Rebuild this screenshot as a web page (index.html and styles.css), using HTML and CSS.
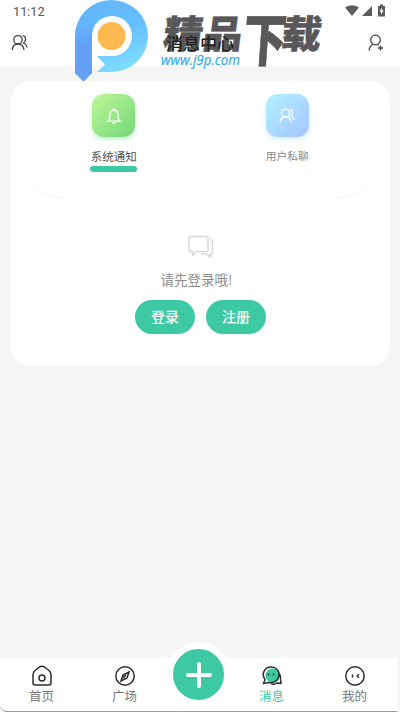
FILE: index.html
```html
<!DOCTYPE html>
<html lang="zh-CN">
<head>
<meta charset="utf-8">
<title>消息中心</title>
<link rel="stylesheet" href="styles.css">
</head>
<body>
<div class="screen">
  <header class="top">
    <div class="status">
      <span>11:12</span>
      <svg width="42" height="14" viewBox="0 0 42 14" fill="#5c5c5c"><path d="M0 4.500Q7 0 14 4.500L7 13z"/><path d="M17 13L27 3V13z"/><path d="M35 1.500h3V3h2v10.500h-7V3h2z"/><path d="M37 4.500l-2.500 4H36v3l2.700-4H37z" fill="#fff"/></svg>
    </div>
    <div class="titlebar">
      <svg class="line" width="18" height="18" viewBox="0 0 18 18"><circle cx="7" cy="5.800" r="4.200"/><path d="M1.200 16q.5-6 5.800-6t6 6M11.500 1.600q3.500.5 3 4.200-.2 2-2 3.200 3 1.200 3.700 4.500"/></svg>
      <h1>消息中心</h1>
      <svg class="line" width="18" height="18" viewBox="0 0 18 18"><circle cx="8.500" cy="6" r="4.800"/><path d="M2 16.500q.8-5 4-6M10.500 10.500l1.200.8M13.500 11.500v5M11 14h5"/></svg>
    </div>
  </header>
  <main class="card">
    <div class="tabs">
      <div class="tab active">
        <div class="tile green"><svg width="18" height="20" viewBox="0 0 18 20"><path d="M9 2.200V4M2.800 15.200q2-1.200 2-5Q4.800 4 9 4t4.200 6.200q0 3.800 2 5zM7.500 17h3"/></svg></div>
        <span>系统通知</span><i></i>
      </div>
      <div class="tab">
        <div class="tile blue"><svg width="18" height="18" viewBox="0 0 18 18"><circle cx="7.500" cy="6" r="4"/><path d="M2 15.500q.5-5.500 5.500-5.500t5.500 5.500M12 2.500q3 .5 2.500 3.500-.2 2-2 2.800 3 1 3.500 4"/></svg></div>
        <span>用户私聊</span>
      </div>
    </div>
    <svg class="arcs" width="379" height="20" viewBox="0 0 379 20"><path d="M23 4Q38 15 55 15M322 15q23 0 40-17" fill="none" stroke="#f7f7f7"/></svg>
    <div class="empty">
      <svg width="26" height="24" viewBox="0 0 26 24"><path d="M2 1.500h17q1 0 1 1v13q0 1-1 1H8.500l-4 4v-4H2q-1 0-1-1v-13q0-1 1-1zM22 5h1.500q1 0 1 1v12q0 1-1 1H22v3l-3.500-3H13"/></svg>
      <p>请先登录哦!</p>
      <div class="actions"><button>登录</button><button>注册</button></div>
    </div>
  </main>
  <nav>
    <a><svg width="22" height="22" viewBox="0 0 22 22"><path d="M4 5.500L8.500 2q2.500-1.500 5 0L18 5.500q2 2 2 4V18q0 2-2 2H4q-2 0-2-2V9.500q0-2 2-4z"/><circle cx="11" cy="13" r="3"/></svg><span>首页</span></a>
    <a><svg width="22" height="22" viewBox="0 0 22 22"><circle cx="11" cy="11" r="9.200"/><path d="M15 7l-2 6-6 3 2-6zM9 13l3-3"/></svg><span>广场</span></a>
    <div class="add"><svg width="26" height="26" viewBox="0 0 26 26"><path d="M13 2v22M2 13h22"/></svg></div>
    <a class="selected"><svg width="22" height="22" viewBox="0 0 22 22"><circle cx="11.500" cy="10.500" r="7" fill="#3dc9a3" stroke="none"/><path d="M4 14.500Q1.500 11 2.500 7.500 4.500 2 10 2q6 0 8 6 .5 6-4 8.500-4 2-7 1l-4.500 1zM18.500 9q1.500 2.500 1 5l.5 4.500-4-.5q-3 2-6 .5"/><path d="M7.500 8.500v2M12.500 8.500v2"/></svg><span>消息</span></a>
    <a><svg width="22" height="22" viewBox="0 0 22 22"><circle cx="11" cy="11" r="9.200"/><path d="M8.500 9.500v3M15 9.300L13.200 11l1.800 1.700"/></svg><span>我的</span></a>
  </nav>
  <svg class="brand" width="400" height="90" viewBox="0 0 400 90">
    <defs>
      <linearGradient id="loop" x1="0" y1="0" x2=".3" y2="1"><stop offset="0" stop-color="#62b4fb"/><stop offset=".5" stop-color="#65bfff"/><stop offset="1" stop-color="#80deff"/></linearGradient>
      <linearGradient id="stem" gradientUnits="userSpaceOnUse" x1="0" y1="15" x2="0" y2="82"><stop offset="0" stop-color="#62a8f8" stop-opacity="0"/><stop offset=".45" stop-color="#629ff5"/><stop offset="1" stop-color="#679ff4"/></linearGradient>
    </defs>
    <circle cx="111" cy="36" r="21" fill="#fff"/>
    <path d="M75 36A36.500 36 0 1 1 112 72H97l8-7.500-8-8.500h15A20 20 0 1 0 92 36V73l-8.500 8.500L75 73z" fill="url(#loop)"/>
    <path d="M75 36q0-12 7-21l15 7q-5 5-5 14v37l-8.500 8.500L75 73z" fill="url(#stem)"/>
    <circle cx="111.500" cy="36" r="14" fill="#fdb94f"/>
    <g class="brand-name">
      <text transform="matrix(.99 0 -.12 .96 162 47.500)" font-size="40">精品</text>
      <text transform="matrix(1.080 0 -.1 1.430 242 61)" font-size="40">下</text>
      <text transform="matrix(1 0 -.12 .96 280 47.500)" font-size="40">载</text>
    </g>
    <text class="site" x="161" y="65" textLength="79" lengthAdjust="spacingAndGlyphs">www.j9p.com</text>
  </svg>
</div>
</body>
</html>
```
FILE: styles.css
```css
* { box-sizing: border-box; }
body { margin: 0; font-family: "Noto Sans CJK SC", sans-serif; }
.screen { position: relative; width: 400px; height: 712px; background: #f5f5f5; display: flex; flex-direction: column; overflow: hidden; }
svg { display: block; }
.line, .tile svg, .empty svg, nav svg { fill: none; }
.top { height: 66px; background: #fff; }
.status { height: 22px; padding: 3px 13px 0; display: flex; justify-content: space-between; font: 400 12.700px/17px Roboto, sans-serif; color: #555; }
.titlebar { height: 42px; padding: 0 15px 0 11px; display: flex; align-items: center; justify-content: space-between; }
.line { stroke: #444; stroke-width: 1.300; }
h1 { position: relative; z-index: 2; margin: 0; padding-left: 4px; font-size: 17px; line-height: 24px; font-weight: 500; color: #222; }
.card { width: 379px; height: 285px; margin: 15px 0 0 11px; border-radius: 20px; background: #fff; }
.tabs { display: flex; height: 102px; padding: 13px 16px 0; }
.tab { flex: 1; display: flex; flex-direction: column; align-items: center; font-size: 11px; line-height: 16px; color: #888; }
.tab span { margin-top: 11px; font-size: 10.700px; }
.tab.active { color: #555; }
.tab.active span { font-size: 11.500px; }
.tab i { width: 47px; height: 6px; margin-top: 2px; border-radius: 3px; background: #3dc9a3; }
.tile { width: 43px; height: 43px; border-radius: 12px; display: flex; align-items: center; justify-content: center; }
.tile svg { stroke: #fff; stroke-width: 1.300; }
.green { background: linear-gradient(135deg, #bef797, #73d879); box-shadow: 0 2px 5px #b9f3c3; }
.blue { background: linear-gradient(135deg, #b1f1ff, #a6c4ff); box-shadow: 0 2px 5px #ccecff; }
.empty { display: flex; flex-direction: column; align-items: center; padding-top: 32px; }
.empty svg { stroke: #d8d8d8; stroke-width: 1.500; }
.empty p { margin: 10px 0 11px; padding-right: 8px; font-size: 13.500px; line-height: 20px; color: #8c8c8c; }
.actions { display: flex; gap: 11px; }
button { width: 60px; height: 34px; padding: 0 0 2px; border: 0; border-radius: 17px; background: #3dc9a3; color: #fff; font: 500 14px/32px "Noto Sans CJK SC", sans-serif; }
nav { display: flex; width: 397px; height: 54px; margin-top: auto; background: #fff; border-bottom: 1px solid #999; border-bottom-left-radius: 7px; }
nav a { width: 83px; padding-top: 7px; display: flex; flex-direction: column; align-items: center; font-size: 12.500px; line-height: 18px; color: #777; }
nav a svg { stroke: #292d30; stroke-width: 1.500; }
nav a span { margin-top: 0; }
nav .selected { color: #3dc9a3; }
.add { width: 65px; height: 65px; margin: -16px -1px 0 0; border: 7px solid #fff; border-radius: 50%; background: #3dc9a3; display: flex; align-items: center; justify-content: center; }
.add svg { stroke: #fff; stroke-width: 4; stroke-linecap: round; }
.brand { position: absolute; top: 0; left: 0; z-index: 1; }
.brand-name { font-family: "Noto Sans CJK SC", sans-serif; font-weight: 900; fill: #505052; stroke: #505052; stroke-width: .5; opacity: .95; }
.site { font: italic 14px "Open Sans", sans-serif; fill: #30a9ee; stroke: #30a9ee; stroke-width: .2; }
```
